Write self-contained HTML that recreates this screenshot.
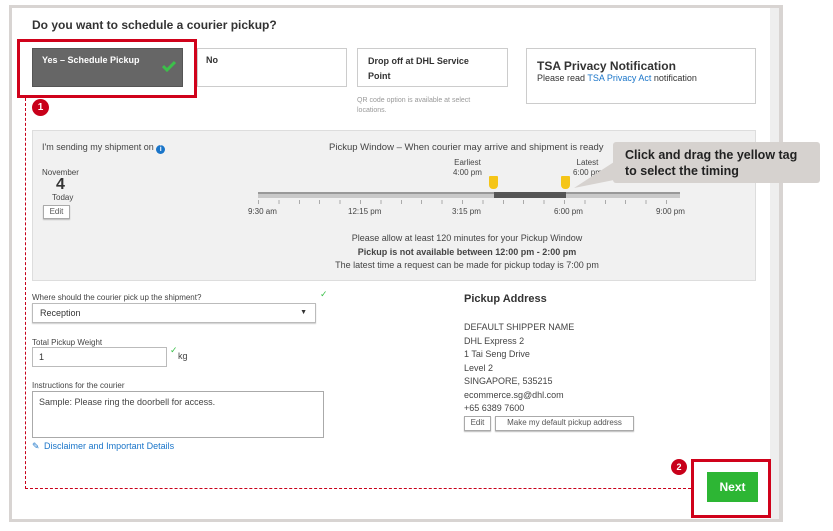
<!DOCTYPE html>
<html><head><style>
*{margin:0;padding:0;box-sizing:border-box}
body{width:833px;height:531px;background:#fff;font-family:"Liberation Sans",Arial,sans-serif;position:relative;overflow:hidden;color:#333}
.a{position:absolute}
.t{font-size:9px;color:#444;white-space:nowrap}
.btn{position:absolute;border:1px solid #aaa;background:#fff;font-size:8px;color:#555;text-align:center;line-height:12px;box-shadow:0 1px 1px #bbb}
</style></head><body>
<div class="a" style="left:9px;top:5px;width:774px;height:517px;border:3px solid #d8d4d2;border-right-width:4px;background:#fff"></div>
<div class="a" style="left:770px;top:8px;width:9px;height:511px;background:#eeeeee"></div>
<div class="a" style="left:32px;top:18px;font-size:12px;font-weight:bold;color:#333">Do you want to schedule a courier pickup?</div>
<div class="a" style="left:32px;top:48px;width:151px;height:39px;background:#666;border:1px solid #555"></div>
<div class="a" style="left:42px;top:55px;font-size:9px;font-weight:bold;color:#fff">Yes – Schedule Pickup</div>
<svg class="a" style="left:162px;top:60px" width="14" height="12"><path d="M1 6 L5 10 L13 2" stroke="#3cc04a" stroke-width="3" fill="none"/></svg>
<div class="a" style="left:17px;top:39px;width:180px;height:59px;border:3px solid #d0021b"></div>
<div class="a" style="left:197px;top:48px;width:150px;height:39px;border:1px solid #ccc;background:#fff"></div>
<div class="a" style="left:206px;top:55px;font-size:9px;font-weight:bold;color:#333">No</div>
<div class="a" style="left:357px;top:48px;width:151px;height:39px;border:1px solid #ccc"></div>
<div class="a" style="left:368px;top:54px;font-size:9px;font-weight:bold;line-height:15px;color:#333">Drop off at DHL Service<br>Point</div>
<div class="a" style="left:357px;top:96px;font-size:7px;color:#999;line-height:10px">QR code option is available at select<br>locations.</div>
<div class="a" style="left:526px;top:48px;width:230px;height:56px;border:1px solid #ccc"></div>
<div class="a" style="left:537px;top:59px;font-size:12px;font-weight:bold;color:#333">TSA Privacy Notification</div>
<div class="a" style="left:537px;top:73px;font-size:9px;color:#333">Please read <span style="color:#1a75c9">TSA Privacy Act</span> notification</div>
<div class="a" style="left:32px;top:99px;width:17px;height:17px;border-radius:50%;background:#c8001a;color:#fff;font-size:10px;font-weight:bold;text-align:center;line-height:17px">1</div>
<div class="a" style="left:25px;top:98px;height:391px;border-left:1px dashed #c8001a"></div>
<div class="a" style="left:25px;top:488px;width:666px;border-top:1px dashed #c8001a"></div>
<div class="a" style="left:32px;top:130px;width:724px;height:151px;background:#f1f1f1;border:1px solid #ddd"></div>
<div class="a t" style="left:42px;top:142px">I'm sending my shipment on <span style="display:inline-block;width:9px;height:9px;border-radius:50%;background:#1a75c9;color:#fff;font-size:7px;text-align:center;line-height:9px;font-weight:bold;vertical-align:-1px">i</span></div>
<div class="a t" style="left:42px;top:168px;font-size:8px">November</div>
<div class="a" style="left:56px;top:176px;font-size:16px;font-weight:bold;color:#333">4</div>
<div class="a t" style="left:52px;top:193px;font-size:8px">Today</div>
<div class="btn" style="left:43px;top:205px;width:27px;height:14px">Edit</div>
<div class="a t" style="left:329px;top:142px;font-size:9.5px">Pickup Window – When courier may arrive and shipment is ready</div>
<div class="a t" style="left:453px;top:158px;font-size:8px;text-align:center;line-height:10px">Earliest<br>4:00 pm</div>
<div class="a t" style="left:573px;top:158px;font-size:8px;text-align:center;line-height:10px">Latest<br>6:00 pm</div>
<div class="a" style="left:258px;top:192px;width:422px;height:6px;background:#c9c9c9;border-top:2px solid #999"></div>
<div class="a" style="left:494px;top:192px;width:72px;height:6px;background:#555"></div>
<div class="a" style="left:489px;top:176px;width:9px;height:13px;background:#f5c518;border-radius:1px 1px 4px 4px"></div>
<div class="a" style="left:561px;top:176px;width:9px;height:13px;background:#f5c518;border-radius:1px 1px 4px 4px"></div>
<div class="a" style="left:258px;top:200px;width:422px;height:4px;background:repeating-linear-gradient(90deg,#aaa 0 1px,transparent 1px 20.4px)"></div>
<div class="a t" style="left:248px;top:207px;font-size:8px">9:30 am</div>
<div class="a t" style="left:348px;top:207px;font-size:8px">12:15 pm</div>
<div class="a t" style="left:452px;top:207px;font-size:8px">3:15 pm</div>
<div class="a t" style="left:554px;top:207px;font-size:8px">6:00 pm</div>
<div class="a t" style="left:656px;top:207px;font-size:8px">9:00 pm</div>
<div class="a t" style="left:240px;top:232px;width:454px;text-align:center;line-height:13.5px">Please allow at least 120 minutes for your Pickup Window<br><b>Pickup is not available between 12:00 pm - 2:00 pm</b><br>The latest time a request can be made for pickup today is 7:00 pm</div>
<svg class="a" style="left:570px;top:160px" width="50" height="32"><path d="M44 2 L44 20 L4 28 Z" fill="#d6d2cf"/></svg>
<div class="a" style="left:613px;top:142px;width:207px;height:41px;background:#d6d2cf;border-radius:3px;font-size:12.5px;font-weight:bold;color:#222;padding:5px 12px;line-height:16px">Click and drag the yellow tag<br>to select the timing</div>
<div class="a t" style="left:32px;top:293px;font-size:8px">Where should the courier pick up the shipment?</div>
<div class="a" style="left:32px;top:303px;width:284px;height:20px;border:1px solid #bbb;box-shadow:0 1px 1px #ccc;font-size:9px;padding:4px 7px;color:#333">Reception<span style="position:absolute;right:8px;font-size:7px;top:5px">▼</span></div>
<div class="a" style="left:320px;top:289px;color:#3cc04a;font-size:9px">✓</div>
<div class="a t" style="left:32px;top:338px;font-size:8px">Total Pickup Weight</div>
<div class="a" style="left:32px;top:347px;width:135px;height:20px;border:1px solid #bbb;font-size:9px;padding:4px 6px;color:#333">1</div>
<div class="a" style="left:170px;top:345px;color:#3cc04a;font-size:9px">✓</div>
<div class="a t" style="left:178px;top:351px">kg</div>
<div class="a t" style="left:32px;top:381px;font-size:8px">Instructions for the courier</div>
<div class="a" style="left:32px;top:391px;width:292px;height:47px;border:1px solid #aaa;font-size:9px;padding:5px 6px;color:#444">Sample: Please ring the doorbell for access.</div>
<div class="a t" style="left:32px;top:441px;color:#1a75c9">&#9998; <span style="margin-left:2px">Disclaimer and Important Details</span></div>
<div class="a" style="left:464px;top:293px;font-size:11px;font-weight:bold;color:#333">Pickup Address</div>
<div class="a t" style="left:464px;top:321px;line-height:13.5px">DEFAULT SHIPPER NAME<br>DHL Express 2<br>1 Tai Seng Drive<br>Level 2<br>SINGAPORE, 535215<br>ecommerce.sg@dhl.com<br>+65 6389 7600</div>
<div class="btn" style="left:464px;top:416px;width:27px;height:15px">Edit</div>
<div class="btn" style="left:495px;top:416px;width:139px;height:15px">Make my default pickup address</div>
<div class="a" style="left:671px;top:459px;width:16px;height:16px;border-radius:50%;background:#c8001a;color:#fff;font-size:9px;font-weight:bold;text-align:center;line-height:16px">2</div>
<div class="a" style="left:691px;top:459px;width:80px;height:59px;border:3px solid #d0021b;background:#fff"></div>
<div class="a" style="left:707px;top:472px;width:51px;height:30px;background:#2db634;color:#fff;font-size:12px;font-weight:bold;text-align:center;line-height:30px">Next</div>
</body></html>
